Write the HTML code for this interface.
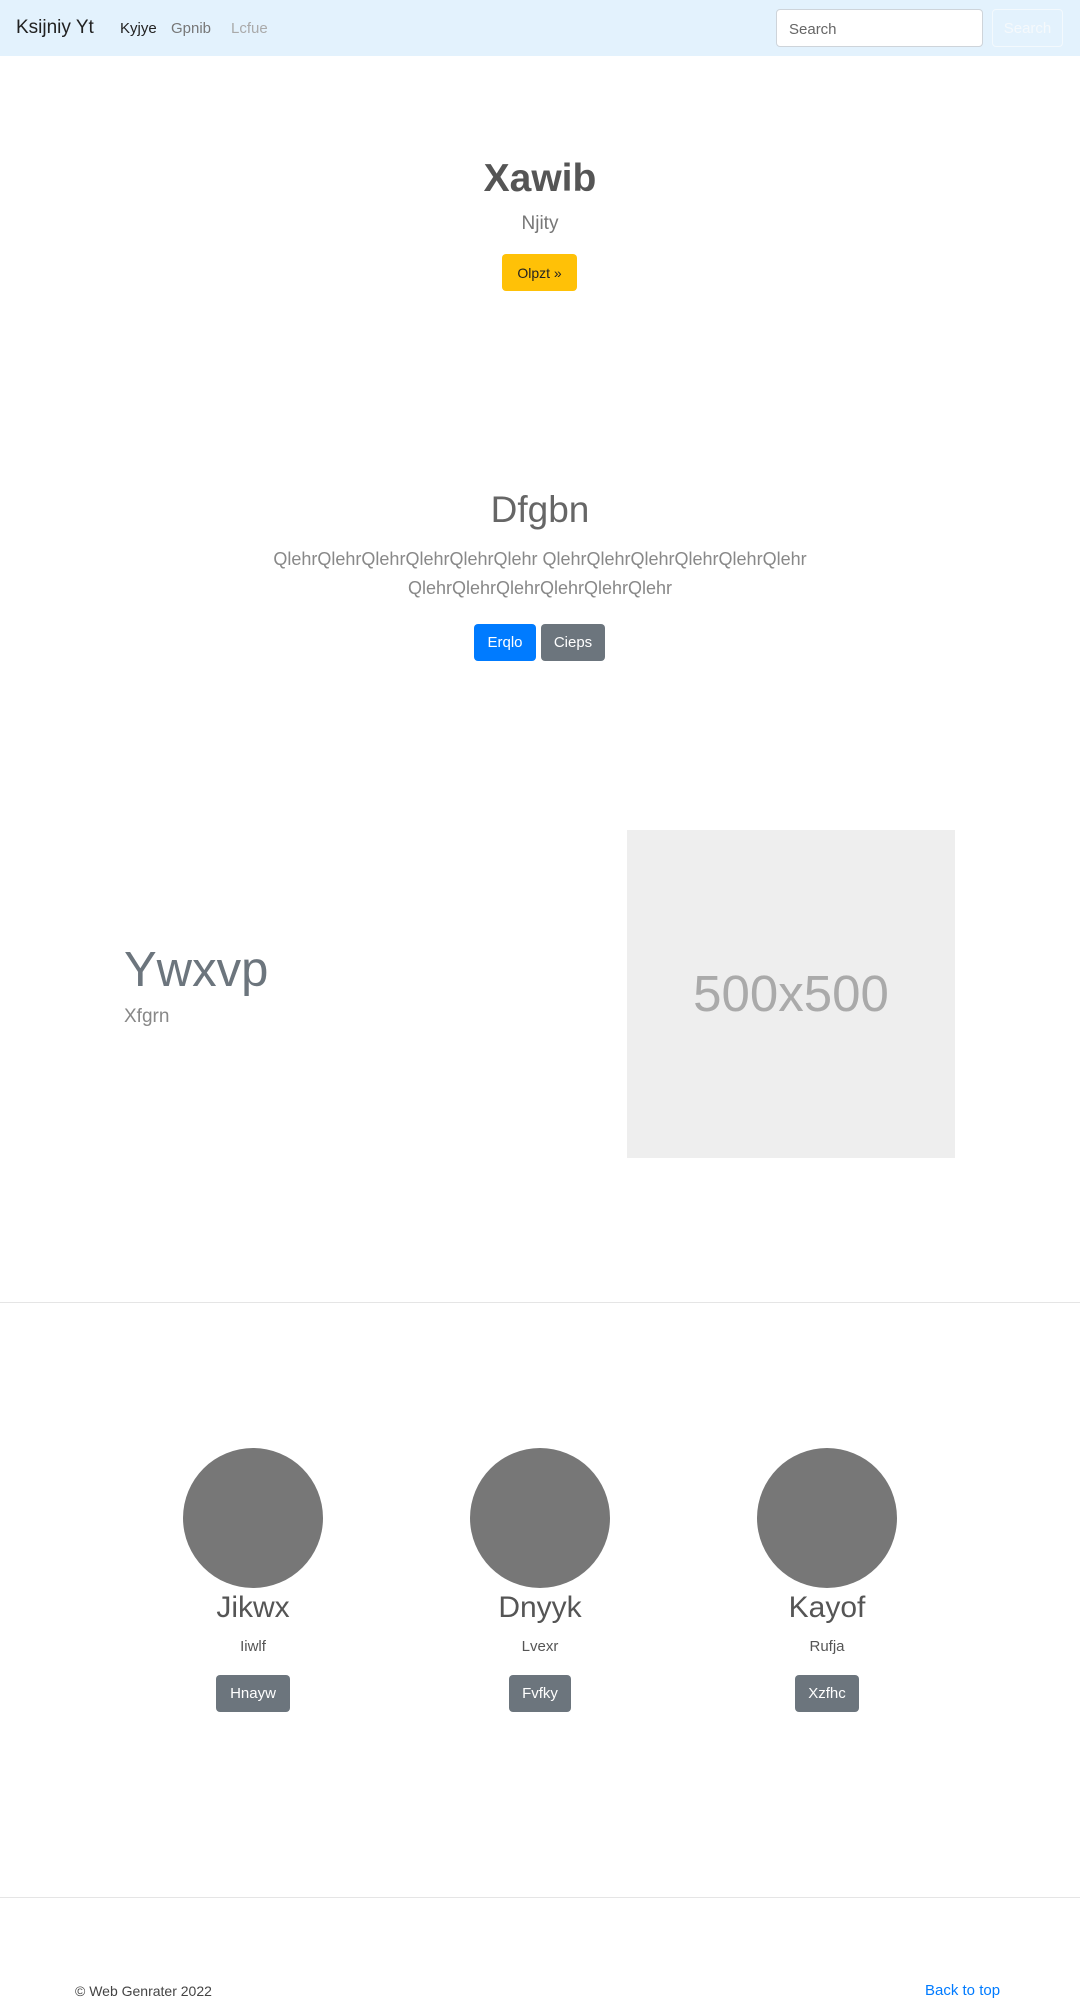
<!DOCTYPE html>
<html><head><meta charset="utf-8">
<style>
*{box-sizing:border-box;margin:0;padding:0}
body{width:1080px;height:2002px;position:relative;background:#fff;font-family:"Liberation Sans",sans-serif;color:#212529;overflow:hidden}
.a{position:absolute}
.c{position:absolute;left:0;width:1080px;text-align:center}
.btn{position:absolute;border-radius:4px;font-size:15px;text-align:center;line-height:38px;color:#fff}
.gray{background:#6c757d}
.circle{position:absolute;width:140px;height:140px;border-radius:50%;background:#777}
.name{position:absolute;width:300px;text-align:center;font-size:30px;color:#555}
.sub{position:absolute;width:300px;text-align:center;font-size:15px;color:#555}
</style></head><body>
<div class="a" style="left:0;top:0;width:1080px;height:56px;background:#e3f2fd"></div>
<div class="a" style="left:16px;top:17px;font-size:19px;color:#222">Ksijniy Yt</div>
<div class="a" style="left:120px;top:20px;font-size:15px;color:#222">Kyjye</div>
<div class="a" style="left:171px;top:20px;font-size:15px;color:#777">Gpnib</div>
<div class="a" style="left:231px;top:20px;font-size:15px;color:#aaa">Lcfue</div>
<div class="a" style="left:776px;top:9px;width:207px;height:38px;background:#fff;border:1px solid #ced4da;border-radius:4px;font-size:15px;color:#666;padding:11px 12px">Search</div>
<div class="a" style="left:992px;top:9px;width:71px;height:38px;border:1px solid #f3f9fd;border-radius:4px;font-size:15px;color:#f5f9fc;text-align:center;line-height:38px">Search</div>

<div class="c" style="top:157px;font-size:39px;font-weight:bold;color:#555">Xawib</div>
<div class="c" style="top:213px;font-size:19px;color:#777">Njity</div>
<div class="btn" style="left:502px;top:254px;width:75px;height:37px;background:#ffc107;color:#222;font-size:14px">Olpzt »</div>

<div class="c" style="top:489px;font-size:37px;color:#666">Dfgbn</div>
<div class="c" style="top:545px;font-size:18px;color:#888;line-height:29px">QlehrQlehrQlehrQlehrQlehrQlehr QlehrQlehrQlehrQlehrQlehrQlehr<br>QlehrQlehrQlehrQlehrQlehrQlehr</div>
<div class="btn" style="left:474px;top:624px;width:62px;height:37px;background:#007bff">Erqlo</div>
<div class="btn gray" style="left:541px;top:624px;width:64px;height:37px">Cieps</div>

<div class="a" style="left:124px;top:942px;font-size:49px;color:#6c757d">Ywxvp</div>
<div class="a" style="left:124px;top:1006px;font-size:19px;color:#888">Xfgrn</div>
<div class="a" style="left:627px;top:830px;width:328px;height:328px;background:#eee;color:#aaa;font-size:51px;text-align:center;line-height:328px">500x500</div>

<div class="a" style="left:0;top:1302px;width:1080px;height:1px;background:#e5e5e5"></div>

<div class="circle" style="left:183px;top:1448px"></div>
<div class="circle" style="left:470px;top:1448px"></div>
<div class="circle" style="left:757px;top:1448px"></div>
<div class="name" style="left:103px;top:1591px">Jikwx</div>
<div class="name" style="left:390px;top:1591px">Dnyyk</div>
<div class="name" style="left:677px;top:1591px">Kayof</div>
<div class="sub" style="left:103px;top:1638px">Iiwlf</div>
<div class="sub" style="left:390px;top:1638px">Lvexr</div>
<div class="sub" style="left:677px;top:1638px">Rufja</div>
<div class="btn gray" style="left:216px;top:1675px;width:74px;height:37px">Hnayw</div>
<div class="btn gray" style="left:509px;top:1675px;width:62px;height:37px">Fvfky</div>
<div class="btn gray" style="left:795px;top:1675px;width:64px;height:37px">Xzfhc</div>

<div class="a" style="left:0;top:1897px;width:1080px;height:1px;background:#e5e5e5"></div>
<div class="a" style="left:75px;top:1983px;font-size:14px;color:#444">© Web Genrater 2022</div>
<div class="a" style="left:925px;top:1982px;font-size:15px;color:#007bff">Back to top</div>
</body></html>
